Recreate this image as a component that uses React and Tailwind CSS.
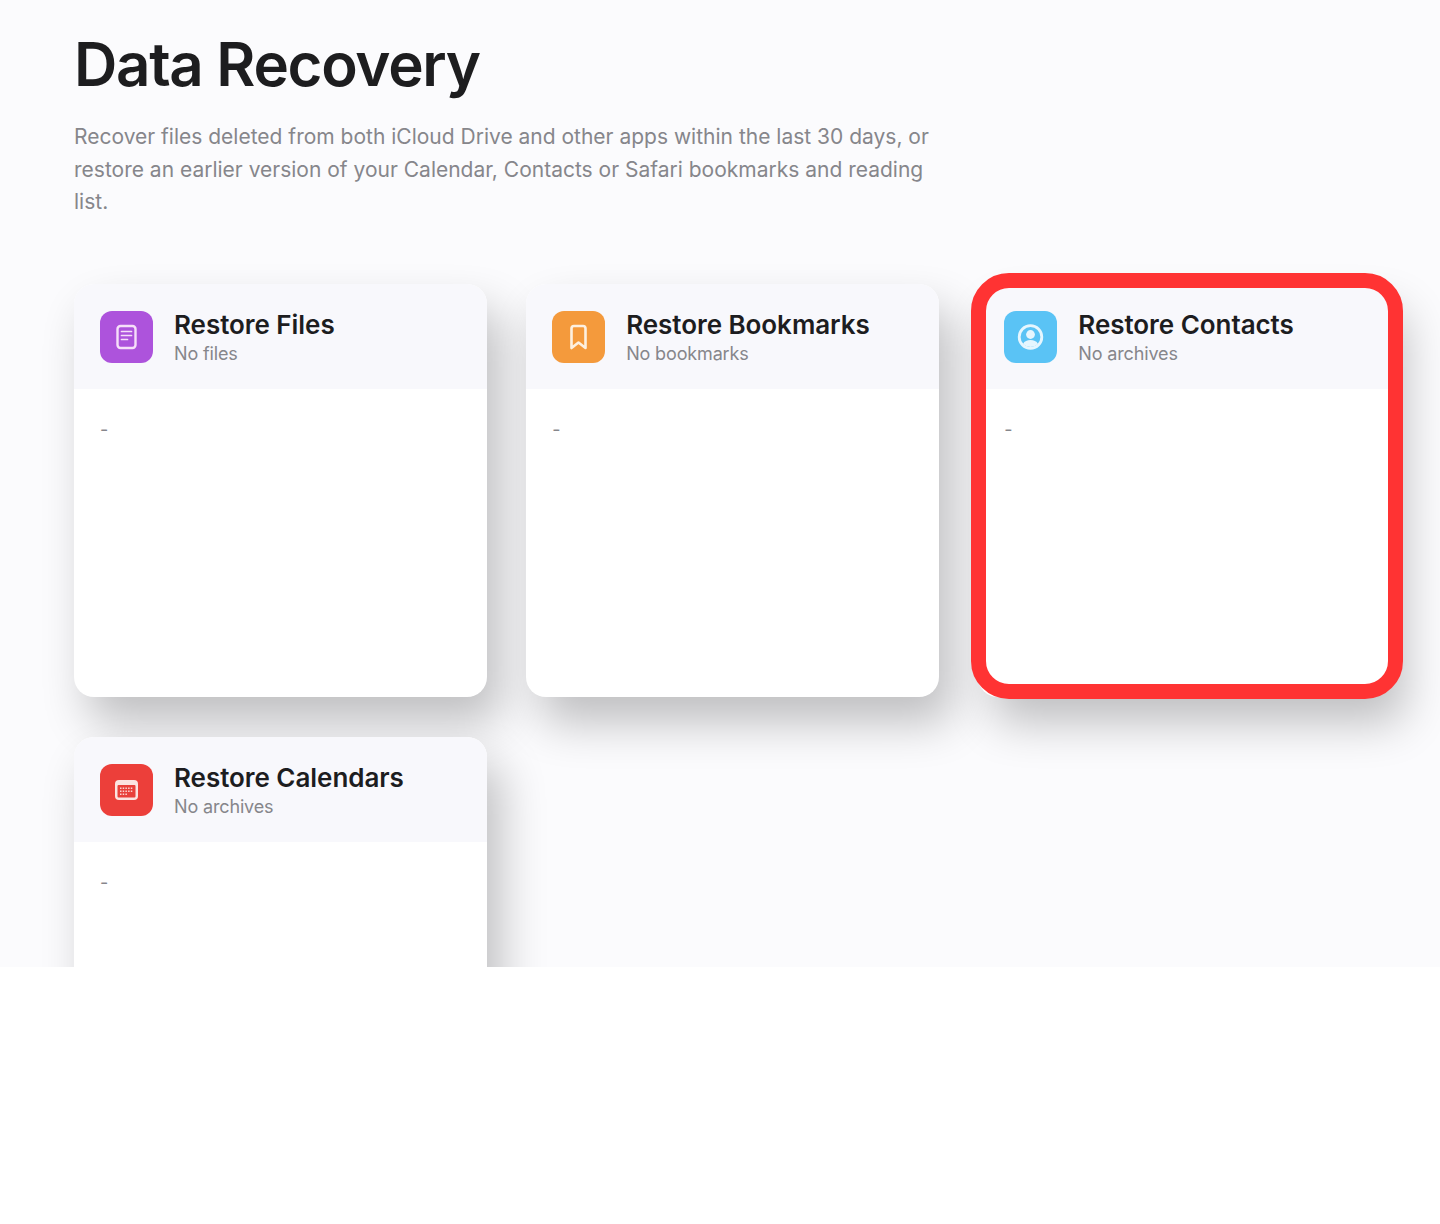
const font = { fontFamily: 'Inter, "Noto Sans", sans-serif' };

function FileIcon() {
  return (
    <svg width="53" height="52" viewBox="0 0 53 52" fill="none">
      <rect x="17.5" y="15" width="18" height="22" rx="3" stroke="#f6dff9" strokeWidth="2.4" />
      <path d="M21.5 20.5h10M21.5 24.5h10M21.5 28.5h6" stroke="#f6dff9" strokeWidth="1.7" strokeLinecap="round" />
    </svg>
  );
}

function BookmarkIcon() {
  return (
    <svg width="53" height="52" viewBox="0 0 53 52" fill="none">
      <path d="M19.5 17.5a2.5 2.5 0 0 1 2.5-2.5h9a2.5 2.5 0 0 1 2.5 2.5V37l-7-5.5-7 5.5z" stroke="#fdf0e0" strokeWidth="2.6" strokeLinejoin="round" />
    </svg>
  );
}

function ContactIcon() {
  return (
    <svg width="53" height="52" viewBox="0 0 53 52" fill="none">
      <circle cx="26.5" cy="26" r="11.3" stroke="#e6f6fe" strokeWidth="2.8" />
      <circle cx="26.5" cy="23.5" r="4.4" fill="#e6f6fe" />
      <path d="M19 33c1.5-3 4.2-4 7.5-4s6 1 7.5 4a11 11 0 0 1-15 0z" fill="#e6f6fe" />
    </svg>
  );
}

function CalendarIcon() {
  return (
    <svg width="53" height="52" viewBox="0 0 53 52" fill="none">
      <rect x="15" y="16" width="23" height="20" rx="4" fill="#fbe3e1" />
      <rect x="17.5" y="21" width="18" height="12.5" rx="1" fill="#e8403b" />
      <path d="M20 24.2h13M20 27.2h13M20 30.2h8" stroke="#fbd5d2" strokeWidth="1.5" strokeDasharray="1.5 1.2" />
    </svg>
  );
}

function Card({ title, sub, tile, icon }) {
  return (
    <div className="h-[413px] rounded-[20px] bg-white shadow-[14px_26px_46px_rgba(0,0,0,0.24)]">
      <div className="flex h-[105px] items-start gap-[21px] rounded-t-[20px] bg-[#f8f8fc] pl-[26px] pt-[27px]">
        <div className={`h-[52px] w-[53px] shrink-0 rounded-[12px] ${tile}`}>{icon}</div>
        <div className="-mt-[1px]">
          <div className="text-[26px] leading-[30px] font-semibold tracking-[-0.05px] text-[#1d1d1f]">{title}</div>
          <div className="mt-[2px] text-[18px] leading-[24px] tracking-[-0.15px] text-[#86868b]">{sub}</div>
        </div>
      </div>
      <div className="pl-[26px] pt-[28px] text-[18px] leading-[26px] text-[#86868b]">-</div>
    </div>
  );
}

export default function App() {
  return (
    <div className="min-h-[1224px] bg-white" style={font}>
      <div className="h-[967px] overflow-hidden bg-[#fbfbfd] pl-[74px]">
        <h1 className="pt-[28px] text-[60px] leading-[72px] font-semibold tracking-[-1.3px] text-[#1d1d1f]">Data Recovery</h1>
        <p className="mt-[21px] w-[870px] text-[21px] leading-[32.5px] text-[#86868b]">
          Recover files deleted from both iCloud Drive and other apps within the last 30 days, or restore an earlier version of your Calendar, Contacts or Safari bookmarks and reading list.
        </p>
        <div className="mt-[65px] grid w-[1317px] grid-cols-3 gap-x-[39.5px] gap-y-10">
          <Card title="Restore Files" sub="No files" tile="bg-[#ad53dc]" icon={<FileIcon />} />
          <Card title="Restore Bookmarks" sub="No bookmarks" tile="bg-[#f49a3c]" icon={<BookmarkIcon />} />
          <div className="relative">
            <Card title="Restore Contacts" sub="No archives" tile="bg-[#5ac3f5]" icon={<ContactIcon />} />
            <div className="absolute -left-[7.5px] -right-[12px] -top-[11px] -bottom-[2px] rounded-[38px] border-[15px] border-[#ff3333]" />
          </div>
          <Card title="Restore Calendars" sub="No archives" tile="bg-[#ec3f3a]" icon={<CalendarIcon />} />
        </div>
      </div>
    </div>
  );
}
